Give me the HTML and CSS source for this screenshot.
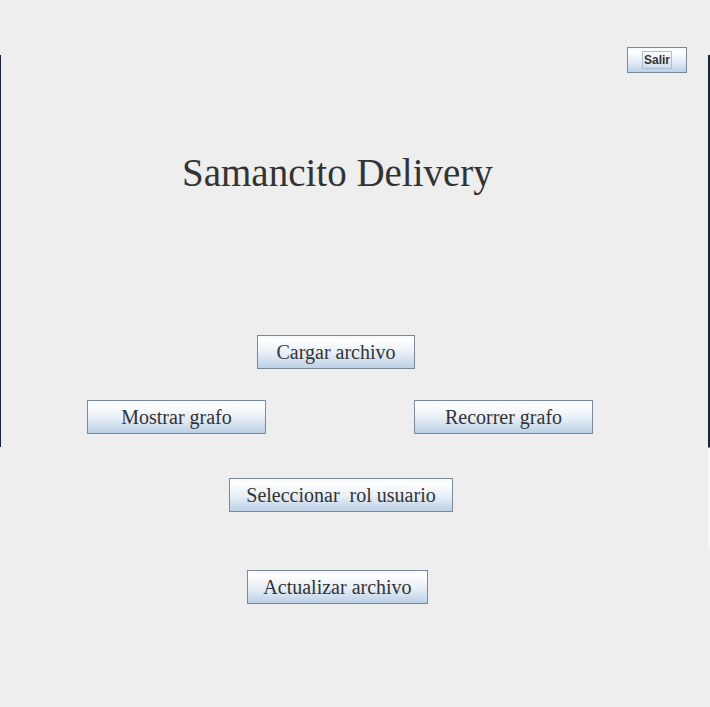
FILE: index.html
```html
<!DOCTYPE html>
<html lang="es">
<head>
<meta charset="utf-8">
<title>Samancito Delivery</title>
<link rel="stylesheet" href="styles.css">
</head>
<body>
<div class="edge edge-left"><div class="edge-dark"></div></div>
<main class="panel">
  <div class="row row-exit"><button class="btn btn-exit"><span class="focus">Salir</span></button></div>
  <h1 class="title">Samancito Delivery</h1>
  <div class="row row-load"><button class="btn btn-load">Cargar archivo</button></div>
  <div class="row row-graph">
    <button class="btn btn-graph">Mostrar grafo</button>
    <button class="btn btn-graph">Recorrer grafo</button>
  </div>
  <div class="row row-role"><button class="btn btn-role">Seleccionar&nbsp; rol usuario</button></div>
  <div class="row row-update"><button class="btn btn-update">Actualizar archivo</button></div>
</main>
<div class="edge edge-right"><div class="edge-dark"></div><div class="edge-light"></div></div>
</body>
</html>
```
FILE: styles.css
```css
html, body {
  margin: 0;
  padding: 0;
}
body {
  width: 710px;
  height: 707px;
  background: #eeeeee;
  display: flex;
  overflow: hidden;
  font-family: "Liberation Serif", "Times New Roman", serif;
  color: #333333;
}
.edge {
  display: flex;
  flex-direction: column;
  padding-top: 55px;
}
.edge-left { width: 1px; }
.edge-right { width: 2px; }
.edge-dark {
  height: 392px;
  background: #172438;
}
.edge-light {
  height: 100px;
  background: #f8f8f8;
  border-top: 1px solid #888;
}
.panel {
  flex: 1;
  display: flex;
  flex-direction: column;
}
.row {
  display: flex;
}
.btn {
  box-sizing: border-box;
  height: 34px;
  margin: 0;
  padding: 0;
  border: 1px solid #7a8a99;
  background: linear-gradient(to bottom, #f3f7fb 0%, #ffffff 12%, #e6eef7 55%, #bcd0e6 100%);
  font-family: "Liberation Serif", "Times New Roman", serif;
  font-size: 20px;
  color: #333333;
  display: flex;
  align-items: center;
  justify-content: center;
  white-space: nowrap;
}
.row-exit {
  margin-top: 47px;
  padding-left: 626px;
}
.btn-exit {
  width: 60px;
  height: 26px;
  font-family: "Liberation Sans", Arial, sans-serif;
  font-weight: bold;
  font-size: 12px;
  color: #333333;
}
.focus {
  border: 1px solid #a8bed3;
  padding: 1px 1px;
  line-height: 14px;
}
.title {
  margin: 77px 0 0 0;
  padding-left: 181px;
  font-weight: normal;
  font-size: 39px;
  line-height: 46px;
  height: 46px;
}
.row-load {
  margin-top: 139px;
  padding-left: 256px;
}
.btn-load { width: 158px; }
.row-graph {
  margin-top: 31px;
  padding-left: 86px;
  gap: 148px;
}
.btn-graph { width: 179px; }
.row-role {
  margin-top: 44px;
  padding-left: 228px;
}
.btn-role { width: 224px; }
.row-update {
  margin-top: 58px;
  padding-left: 246px;
}
.btn-update { width: 181px; }
```
